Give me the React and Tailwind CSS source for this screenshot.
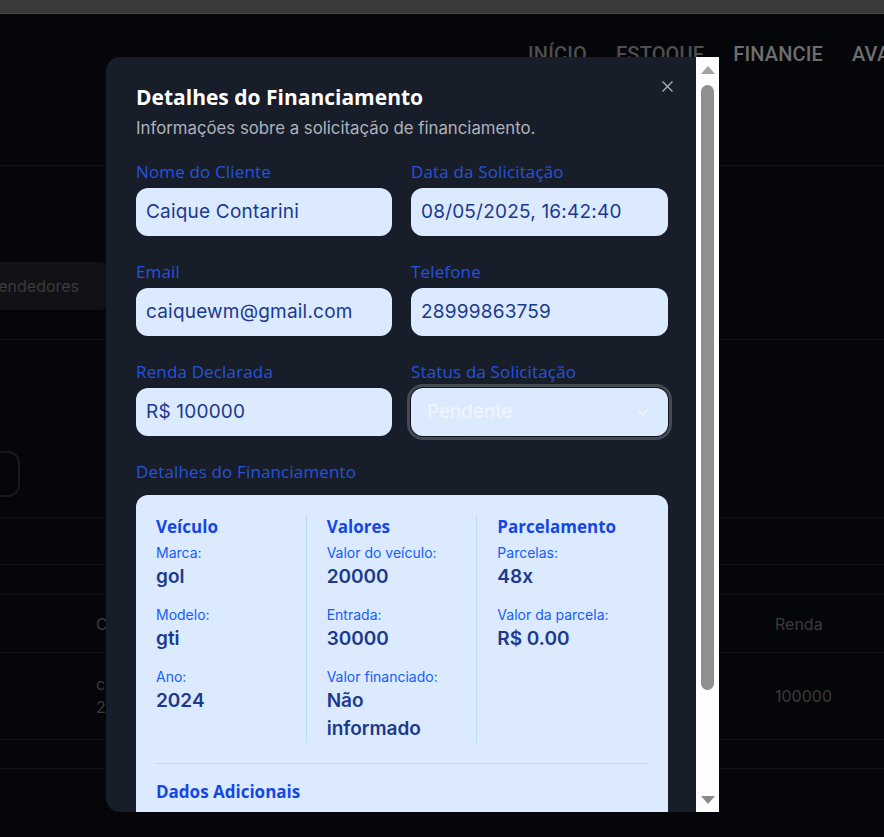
const heading = "font-['Open_Sans',sans-serif]";
const body = "font-['Inter',sans-serif]";

const fields = [
  { label: "Nome do Cliente", value: "Caique Contarini" },
  { label: "Data da Solicitação", value: "08/05/2025, 16:42:40" },
  { label: "Email", value: "caiquewm@gmail.com" },
  { label: "Telefone", value: "28999863759" },
  { label: "Renda Declarada", value: "R$ 100000" },
];

const columns = [
  {
    title: "Veículo",
    items: [
      ["Marca:", "gol"],
      ["Modelo:", "gti"],
      ["Ano:", "2024"],
    ],
  },
  {
    title: "Valores",
    items: [
      ["Valor do veículo:", "20000"],
      ["Entrada:", "30000"],
      ["Valor financiado:", "Não informado"],
    ],
  },
  {
    title: "Parcelamento",
    items: [
      ["Parcelas:", "48x"],
      ["Valor da parcela:", "R$ 0.00"],
    ],
  },
];

function Label({ children, className = "" }) {
  return (
    <div className={`${heading} text-[17px] leading-6 font-medium tracking-[0.15px] text-[#2453de] ${className}`}>
      {children}
    </div>
  );
}

function Field({ label, value }) {
  return (
    <div>
      <Label className="mb-1">{label}</Label>
      <div className={`${body} flex h-12 items-center rounded-xl bg-blue-100 px-2.5 text-[19px] tracking-[0.2px] text-blue-900`}>
        {value}
      </div>
    </div>
  );
}

function Background() {
  const dim = "text-[#3b3b3b]";
  const line = "border-b border-[#111318]";
  return (
    <div className={`${body} min-h-[837px] overflow-hidden bg-[#05060a]`}>
      <div className="h-[14px] border-b border-[#4a4a4a] bg-[#3a3a3a]" />
      <div className="h-[152px] border-b border-[#14161b] pt-[26px]">
        <nav className="flex gap-[29px] whitespace-nowrap pl-[528px] font-['Roboto',sans-serif] text-xl leading-7 font-medium tracking-[0.15px]">
          <span className="text-[#4f4f4f]">INÍCIO</span>
          <span className="text-[#4f4f4f]">ESTOQUE</span>
          <span className="text-[#6e6e6e]">FINANCIE</span>
          <span className="text-[#6e6e6e]">AVALIE</span>
        </nav>
      </div>
      <div className="h-[96px]" />
      <div className="flex h-12">
        <div className={`-ml-[12px] flex items-center rounded-r-md bg-[#101216] pr-7 text-base ${dim}`}>
          Vendedores
        </div>
      </div>
      <div className={`h-[30px] ${line}`} />
      <div className="h-[111px]" />
      <div className="-ml-[20px] h-[46px] w-[40px] rounded-xl border-2 border-[#17191e]" />
      <div className={`h-[21px] ${line}`} />
      <div className={`h-[47px] ${line}`} />
      <div className={`h-[30px] ${line}`} />
      <div className={`flex h-[58px] items-center text-base ${line} ${dim}`}>
        <span className="w-[775px] pl-[96px]">Cliente</span>
        <span>Renda</span>
      </div>
      <div className={`flex h-[87px] items-center text-base ${line} ${dim}`}>
        <div className="w-[775px] pl-[96px] leading-[23px]">
          <div>caique</div>
          <div>2025</div>
        </div>
        <span>100000</span>
      </div>
      <div className={`h-[29px] ${line}`} />
    </div>
  );
}

function Scrollbar() {
  return (
    <div className="flex w-[23px] shrink-0 flex-col items-center bg-[#fdfdfd] pt-[9px] pb-[8px]">
      <svg width="14" height="8" viewBox="0 0 14 8">
        <path d="M7 0 L14 8 L0 8 Z" fill="#a3a3a3" />
      </svg>
      <div className="mt-[11px] h-[605px] w-[13px] rounded-full bg-[#8f8f8f]" />
      <div className="flex-1" />
      <svg width="14" height="8" viewBox="0 0 14 8">
        <path d="M0 0 L14 0 L7 8 Z" fill="#8c8c8c" />
      </svg>
    </div>
  );
}

function Modal() {
  return (
    <div className="absolute left-[106px] top-[57px] flex h-[755px] w-[613px] overflow-hidden rounded-l-[14px] bg-[#181d2a]">
      <div className="relative flex-1 overflow-hidden pt-[26px] pr-[28px] pl-[30px]">
        <button className="absolute right-[23px] top-[24px]">
          <svg width="11" height="11" viewBox="0 0 11 11" fill="none" stroke="#aab0ba" strokeWidth="1.4">
            <path d="M0.5 0.5 L10.5 10.5 M10.5 0.5 L0.5 10.5" />
          </svg>
        </button>
        <h2 className={`${heading} text-[21px] leading-7 font-bold text-white`}>Detalhes do Financiamento</h2>
        <p className={`${body} mt-[5px] text-[16.8px] leading-6 text-[#aeb2bb]`}>
          Informações sobre a solicitação de financiamento.
        </p>

        <div className="mt-5 grid grid-cols-[256px_257px] gap-x-[19px] gap-y-6">
          {fields.map((f) => (
            <Field key={f.label} label={f.label} value={f.value} />
          ))}
          <div>
            <Label className="mb-1">Status da Solicitação</Label>
            <div
              className={`${body} flex h-12 items-center justify-between rounded-xl bg-blue-100 pl-4 pr-5 text-[19px] text-[#f1f5ff] ring-[3px] ring-[#464a53] ring-offset-1 ring-offset-[#0e121b]`}
            >
              <span>Pendente</span>
              <svg width="11" height="7" viewBox="0 0 11 7" fill="none" stroke="#f1f5ff" strokeWidth="1.4">
                <path d="M0.5 0.8 L5.5 5.8 L10.5 0.8" />
              </svg>
            </div>
          </div>
        </div>

        <Label className="mt-6 mb-[11px]">Detalhes do Financiamento</Label>
        <div className="rounded-xl bg-blue-100 p-5">
          <div className="grid grid-cols-3 gap-5">
            {columns.map((col, i) => (
              <div key={col.title} className={i < 2 ? "border-r border-blue-200 pr-5" : ""}>
                <h3 className={`${heading} mb-1 text-[17px] leading-6 font-bold text-blue-700`}>
                  {col.title}
                </h3>
                <div className="flex flex-col gap-3.5">
                  {col.items.map(([k, v]) => (
                    <div key={k} className={body}>
                      <div className="text-sm leading-5 text-blue-600">{k}</div>
                      <div className="text-[19px] leading-7 font-semibold text-blue-900">{v}</div>
                    </div>
                  ))}
                </div>
              </div>
            ))}
          </div>
          <div className="mt-5 border-t border-blue-200 pt-4">
            <h3 className={`${heading} mb-2 text-[17px] leading-6 font-bold text-blue-700`}>
              Dados Adicionais
            </h3>
            <div className={`${body} grid grid-cols-2 gap-5`}>
              <div>
                <div className="text-sm leading-5 text-blue-600">Observações:</div>
                <div className="text-[19px] leading-7 font-semibold text-blue-900">Nenhuma</div>
              </div>
              <div>
                <div className="text-sm leading-5 text-blue-600">Vendedor:</div>
                <div className="text-[19px] leading-7 font-semibold text-blue-900">Não atribuído</div>
              </div>
            </div>
          </div>
        </div>

        <div className="mt-6 flex justify-end gap-3 pb-6">
          <button className={`${body} rounded-xl bg-[#2a3142] px-5 py-2.5 text-white`}>Fechar</button>
          <button className={`${body} rounded-xl bg-blue-600 px-5 py-2.5 text-white`}>Salvar</button>
        </div>
      </div>
      <Scrollbar />
    </div>
  );
}

export default function App() {
  return (
    <div className="relative">
      <Background />
      <Modal />
    </div>
  );
}
